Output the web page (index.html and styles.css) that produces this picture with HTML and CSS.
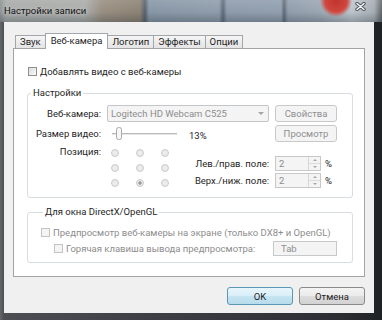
FILE: index.html
```html
<!DOCTYPE html>
<html lang="ru">
  <head>
    <meta charset="UTF-8" />
    <meta name="viewport" content="width=device-width, initial-scale=1.0" />
    <title>Настройки записи</title>
    <link rel="stylesheet" href="styles.css">
  </head>
  <body>
    <div class="window">
      <div class="titlebar">
        <span class="title">Настройки записи</span>
        <svg class="close" width="11" height="9" viewBox="0 0 11 9">
          <path d="M2 1.5 L9 7.5 M9 1.5 L2 7.5" stroke="#4a4f55" stroke-width="3.4" stroke-linecap="round" />
          <path d="M2 1.5 L9 7.5 M9 1.5 L2 7.5" stroke="#f4f6f8" stroke-width="1.6" stroke-linecap="round" />
        </svg>
      </div>

      <div class="client">
        <div class="tabs">
          <div class="tab">Звук</div>
          <div class="tab active">Веб-камера</div>
          <div class="tab">Логотип</div>
          <div class="tab">Эффекты</div>
          <div class="tab">Опции</div>
        </div>

        <div class="panel">
          <label class="check">
            <span class="box"></span>
            Добавлять видео с веб-камеры
          </label>

          <fieldset class="group">
            <legend>Настройки</legend>
            <div class="settings-grid">
              <span class="lbl">Веб-камера:</span>
              <div class="combo">
                Logitech HD Webcam C525
                <span class="arrow"></span>
              </div>
              <div class="btn disabled">Свойства</div>

              <span class="lbl">Размер видео:</span>
              <div class="slider-cell">
                <svg class="slider" width="66" height="14" viewBox="0 0 66 14">
                  <line x1="0" y1="6.5" x2="65" y2="6.5" stroke="#b9b9b9" stroke-width="1" />
                  <line x1="0" y1="7.5" x2="65" y2="7.5" stroke="#e6e6e6" stroke-width="1" />
                  <rect x="4.5" y="0.5" width="5" height="12" rx="2" fill="#f6f6f6" stroke="#a9a9a9" />
                </svg>
                <span class="pct">13%</span>
              </div>
              <div class="btn disabled">Просмотр</div>

              <span class="lbl">Позиция:</span>
              <div class="position">
                <div class="radios">
                  <span class="radio"></span>
                  <span class="radio"></span>
                  <span class="radio"></span>
                  <span class="radio"></span>
                  <span class="radio"></span>
                  <span class="radio"></span>
                  <span class="radio"></span>
                  <span class="radio checked"></span>
                  <span class="radio"></span>
                </div>
                <div class="margin-labels">
                  <span>Лев./прав. поле:</span>
                  <span>Верх./ниж. поле:</span>
                </div>
              </div>
              <div class="spins">
                <div class="spin-row">
                  <div class="spin">
                    <span class="val">2</span>
                    <span class="arrows"><i class="up"></i><i class="down"></i></span>
                  </div>
                  <span class="unit">%</span>
                </div>
                <div class="spin-row">
                  <div class="spin">
                    <span class="val">2</span>
                    <span class="arrows"><i class="up"></i><i class="down"></i></span>
                  </div>
                  <span class="unit">%</span>
                </div>
              </div>
            </div>
          </fieldset>

          <fieldset class="group overlay">
            <legend>Для окна DirectX/OpenGL</legend>
            <label class="check disabled">
              <span class="box"></span>
              Предпросмотр веб-камеры на экране (только DX8+ и OpenGL)
            </label>
            <div class="hotkey-row">
              <label class="check disabled">
                <span class="box"></span>
                Горячая клавиша вывода предпросмотра:
              </label>
              <div class="field">Tab</div>
            </div>
          </fieldset>
        </div>

        <div class="buttons">
          <div class="btn default">OK</div>
          <div class="btn">Отмена</div>
        </div>
      </div>
    </div>
  </body>
</html>
```

FILE: styles.css
```css
* {
  margin: 0;
  padding: 0;
  box-sizing: border-box;
}

body {
  width: 382px;
  height: 320px;
  overflow: hidden;
  background-color: #2f3236;
  font-family: Roboto, "Noto Sans", sans-serif;
  font-size: 9.5px;
  color: #1e1e1e;
}

.window {
  height: 320px;
  display: flex;
  flex-direction: column;
  background: linear-gradient(to right, #63676a 0, #4b4f53 4px, #3c4044 40%, #2a2d31 90%, #1f2225 100%);
}

/* aero glass title bar */
.titlebar {
  height: 22px;
  display: flex;
  align-items: center;
  padding: 0 16px 2px 4px;
  background:
    radial-gradient(circle at 336px 1px, #c0342e 0, #d0473f 11px, rgba(208, 71, 63, 0) 16px),
    linear-gradient(rgba(255, 255, 255, 0.12), rgba(255, 255, 255, 0) 55%, rgba(40, 50, 60, 0.3)),
    linear-gradient(to right, #8c9193 0, #a8abaa 6px, #aaaca9 85px, #988e81 102px, #8c8273 140px, #56606b 145px, #8796a6 149px, #8e9cab 219px, #5d6a78 223px, #8d9bab 227px, #909eae 281px, #5e6977 284px, #8f9cab 288px, #9aa6b2 320px, #bcc4cb 352px, #a6adb3 374px, #5f6468 382px);
}

.title {
  color: #121212;
  text-shadow: 0 0 5px rgba(255, 255, 255, 0.55);
}

.close {
  margin-left: auto;
  align-self: flex-start;
  margin-top: 2px;
}

.client {
  flex: 1;
  margin: 0 8px 7px 4px;
  padding: 11px 9px 0 9px;
  background-color: #f0f0f0;
  display: flex;
  flex-direction: column;
}

/* tabs */
.tabs {
  display: flex;
  align-items: flex-end;
  height: 15px;
  padding-left: 2px;
}

.tab {
  height: 13px;
  line-height: 12px;
  padding: 0 4px;
  border: 1px solid #a2a5aa;
  border-bottom: none;
  background: linear-gradient(#f5f5f5, #e4e4e4);
  margin-right: -1px;
}

.tab.active {
  position: relative;
  z-index: 1;
  height: 16px;
  line-height: 13px;
  margin-bottom: -1px;
  padding: 0 5px;
  background: #ffffff;
}

.panel {
  height: 229px;
  border: 1px solid #a3a3a3;
  background-color: #ffffff;
  padding: 15px 11px 0 13px;
}

/* checkboxes */
.check {
  display: flex;
  align-items: center;
  height: 14px;
  margin-left: 1px;
}

.box {
  width: 9px;
  height: 9px;
  margin-right: 3px;
  border: 1px solid #8e8f8f;
  background: linear-gradient(135deg, #dcdcdc, #fbfbfb);
}

.check.disabled {
  color: #8d8d8d;
}

.check.disabled .box {
  border-color: #c3c3c3;
  background: #f4f4f4;
}

/* group boxes */
.group {
  margin-top: 8px;
  border: 1px solid #d8dde1;
  border-radius: 3px;
  padding: 5px 0 7px 0;
}

.group legend {
  margin-left: 3px;
  padding: 0 2px;
  line-height: 14px;
}

.settings-grid {
  display: grid;
  grid-template-columns: 73px 162px 62px;
  grid-template-rows: 17px 17px 45px;
  column-gap: 6px;
  row-gap: 3px;
}

.lbl {
  text-align: right;
  line-height: 17px;
}

.lbl:nth-of-type(3) {
  line-height: 14px;
}

.combo {
  display: flex;
  align-items: center;
  padding-left: 3px;
  border: 1px solid #c3c6c9;
  border-radius: 2px;
  background-color: #f4f4f4;
  color: #8d8d8d;
}

.arrow {
  margin-left: auto;
  margin-right: 4px;
  border-left: 3px solid transparent;
  border-right: 3px solid transparent;
  border-top: 3px solid #a3a3a3;
}

.btn {
  display: flex;
  align-items: center;
  justify-content: center;
  border: 1px solid #8a8a8a;
  border-radius: 3px;
  background: linear-gradient(#f3f3f3 0, #ebebeb 50%, #dddddd 51%, #d2d2d2 100%);
}

.btn.disabled {
  border-color: #c6c8ca;
  background: #f4f4f4;
  color: #8f8f8f;
}

.btn.default {
  border-color: #5a97b5;
  background: linear-gradient(#e8f5fb 0, #d9eef8 50%, #c6e4f2 51%, #b8dcec 100%);
}

.slider-cell {
  display: flex;
  align-items: center;
}

.slider {
  margin-left: 5px;
}

.pct {
  margin-left: 11px;
  padding-top: 3px;
}

.position {
  display: flex;
}

.radios {
  display: grid;
  grid-template-columns: repeat(3, 15px);
  grid-auto-rows: 15px;
  column-gap: 10px;
  place-items: center;
}

.radio {
  width: 8px;
  height: 8px;
  border: 1px solid #cacaca;
  border-radius: 50%;
  background: radial-gradient(circle, #f0f0f0 0, #e4e4e4 100%);
}

.radio.checked {
  background: radial-gradient(circle, #9c9c9c 0, #9c9c9c 1.4px, #eeeeee 2px, #e2e2e2 100%);
}

.margin-labels {
  margin-left: auto;
  margin-top: 11px;
  display: flex;
  flex-direction: column;
  gap: 2px;
  text-align: right;
}

.margin-labels span {
  line-height: 15px;
}

.spins {
  margin-top: 11px;
  display: flex;
  flex-direction: column;
  gap: 2px;
}

.spin-row {
  display: flex;
  align-items: center;
}

.spin {
  display: flex;
  width: 46px;
  height: 15px;
  border: 1px solid #c6c8ca;
  background-color: #f4f4f4;
  color: #8d8d8d;
}

.val {
  flex: 1;
  padding-left: 3px;
  line-height: 13px;
}

.arrows {
  width: 12px;
  display: flex;
  flex-direction: column;
  border-left: 1px solid #d6d6d6;
}

.arrows i {
  flex: 1;
  display: flex;
  align-items: center;
  justify-content: center;
}

.arrows i::before {
  content: "";
  border-left: 2px solid transparent;
  border-right: 2px solid transparent;
}

.arrows .up {
  border-bottom: 1px solid #dcdcdc;
}

.arrows .up::before {
  border-bottom: 2px solid #a6a6a6;
}

.arrows .down::before {
  border-top: 2px solid #a6a6a6;
}

.unit {
  margin-left: 4px;
}

.group.overlay {
  margin-top: 7px;
  padding: 6px 15px 6px 12px;
}

.hotkey-row {
  display: flex;
  align-items: center;
  justify-content: space-between;
  height: 15px;
  margin-top: 2px;
  padding-left: 13px;
}

.field {
  width: 64px;
  height: 15px;
  line-height: 13px;
  padding-left: 7px;
  border: 1px solid #c6c8ca;
  background-color: #f4f4f4;
  color: #8d8d8d;
}

.buttons {
  display: flex;
  justify-content: flex-end;
  gap: 6px;
  margin-top: 10px;
}

.buttons .btn {
  width: 66px;
  height: 18px;
}
```
